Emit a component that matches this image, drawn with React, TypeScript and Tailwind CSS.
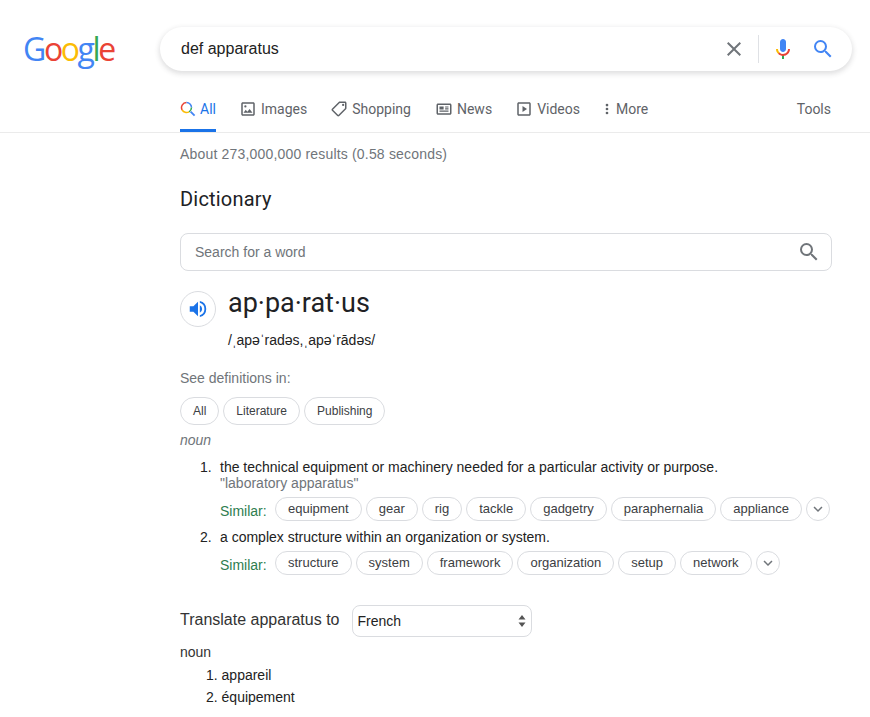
import type React from "react"

const similarOne = ["equipment", "gear", "rig", "tackle", "gadgetry", "paraphernalia", "appliance"]
const similarTwo = ["structure", "system", "framework", "organization", "setup", "network"]

export default function App() {
  return (
    <div className="w-[870px] h-[717px] overflow-hidden bg-white font-['Liberation_Sans',Arial,sans-serif]">
      <header className="h-[88px] flex items-start pt-[27px]">
        <GoogleLogo />
        <div className="ml-[46px] w-[692px] h-[44px] rounded-[22px] bg-white shadow-[0_2px_5px_1px_rgba(64,60,67,0.16)] flex items-center pl-[21px] pr-[17px]">
          <span className="text-[16px] text-[#222] flex-1">def apparatus</span>
          <svg viewBox="0 0 24 24" className="w-[24px] h-[24px] fill-[#70757a]">
            <path d="M19 6.41L17.59 5 12 10.59 6.41 5 5 6.41 10.59 12 5 17.59 6.41 19 12 13.41 17.59 19 19 17.59 13.41 12z" />
          </svg>
          <div className="ml-[12px] mr-[12px] w-px h-[28px] bg-[#dfe1e5]" />
          <MicIcon />
          <svg viewBox="0 0 24 24" className="ml-[16px] w-[24px] h-[24px] fill-[#4285f4]">
            <path d="M15.5 14h-.79l-.28-.27A6.471 6.471 0 0 0 16 9.5 6.5 6.5 0 1 0 9.5 16c1.61 0 3.09-.59 4.23-1.57l.27.28v.79l5 4.99L20.49 19l-4.99-5zm-6 0C7.01 14 5 11.99 5 9.5S7.01 5 9.5 5 14 7.01 14 9.5 11.99 14 9.5 14z" />
          </svg>
        </div>
      </header>

      <nav className="h-[45px] border-b border-[#ebebeb] pl-[180px] pr-[39px] flex items-start font-['Roboto',Arial,sans-serif] text-[14px] text-[#5f6368]">
        <div className="w-[36px] h-[44px] flex items-start gap-[4px] pt-[11px] border-b-[3px] border-[#1a73e8] text-[#1a73e8]">
          <AllIcon />
          <span>All</span>
        </div>
        <NavTab className="ml-[23px]" label="Images" icon={<ImagesIcon />} />
        <NavTab className="ml-[23px]" label="Shopping" icon={<ShoppingIcon />} />
        <NavTab className="ml-[24px]" label="News" icon={<NewsIcon />} />
        <NavTab className="ml-[23px]" label="Videos" icon={<VideosIcon />} />
        <NavTab className="ml-[18px]" label="More" icon={<MoreIcon />} gap="gap-0" />
        <span className="ml-auto pt-[11px]">Tools</span>
      </nav>

      <main className="pl-[180px] pr-[38px]">
        <p className="pt-[13px] text-[14px] tracking-[0.18px] leading-[16px] text-[#70757a]">About 273,000,000 results (0.58 seconds)</p>
        <h2 className="mt-[24px] text-[20px] tracking-[0.2px] leading-[26px] text-[#202124] font-['Roboto',Arial,sans-serif]">Dictionary</h2>

        <div className="mt-[21px] h-[38px] rounded-[8px] border border-[#dadce0] flex items-center pl-[14px] pr-[10px]">
          <span className="flex-1 text-[14px] text-[#70757a]">Search for a word</span>
          <svg viewBox="0 0 24 24" className="w-[24px] h-[24px] fill-[#70757a]">
            <path d="M15.5 14h-.79l-.28-.27A6.471 6.471 0 0 0 16 9.5 6.5 6.5 0 1 0 9.5 16c1.61 0 3.09-.59 4.23-1.57l.27.28v.79l5 4.99L20.49 19l-4.99-5zm-6 0C7.01 14 5 11.99 5 9.5S7.01 5 9.5 5 14 7.01 14 9.5 11.99 14 9.5 14z" />
          </svg>
        </div>

        <div className="mt-[14px] flex items-start">
          <div className="mt-[6px] w-[36px] h-[36px] rounded-full border border-[#dadce0] flex items-center justify-center">
            <svg viewBox="0 0 24 24" className="w-[22px] h-[22px] fill-[#1a73e8]">
              <path d="M3 9v6h4l5 5V4L7 9H3zm13.5 3A4.5 4.5 0 0 0 14 7.97v8.05A4.5 4.5 0 0 0 16.5 12zM14 3.23v2.06a7 7 0 0 1 0 13.42v2.06a9 9 0 0 0 0-17.54z" />
            </svg>
          </div>
          <div className="ml-[12px]">
            <div className="text-[27px] leading-[36px] text-[#202124] font-['Roboto',Arial,sans-serif]">ap·pa·rat·us</div>
            <div className="mt-[10px] text-[14px] leading-[18px] text-[#222]">/ˌapəˈradəs,ˌapəˈrādəs/</div>
          </div>
        </div>

        <p className="mt-[20px] text-[14px] leading-[18px] text-[#70757a]">See definitions in:</p>
        <div className="mt-[10px] flex gap-[4px]">
          <Chip label="All" />
          <Chip label="Literature" />
          <Chip label="Publishing" />
        </div>

        <p className="mt-[6px] text-[14px] leading-[18px] italic text-[#70757a]">noun</p>

        <div className="mt-[10px] flex pl-[20px] text-[14px] leading-[16px] text-[#222]">
          <span className="w-[20px]">1.</span>
          <div className="flex-1">
            <p>the technical equipment or machinery needed for a particular activity or purpose.</p>
            <p className="text-[#70757a]">"laboratory apparatus"</p>
            <SimilarRow words={similarOne} />
          </div>
        </div>
        <div className="mt-[8px] flex pl-[20px] text-[14px] leading-[16px] text-[#222]">
          <span className="w-[20px]">2.</span>
          <div className="flex-1">
            <p>a complex structure within an organization or system.</p>
            <SimilarRow words={similarTwo} />
          </div>
        </div>

        <div className="mt-[30px] flex items-start">
          <span className="mt-[3px] text-[16px] leading-[24px] text-[#333]">Translate apparatus to</span>
          <div className="ml-[12px] w-[180px] h-[32px] rounded-[8px] border border-[#dadce0] flex items-center justify-between pl-[5px] pr-[5px] text-[14px] text-[#222]">
            <span>French</span>
            <svg viewBox="0 0 8 14" className="w-[8px] h-[14px] fill-[#555]">
              <path d="M4 1L7.5 5.5H.5zM4 13L.5 8.5h7z" />
            </svg>
          </div>
        </div>
        <p className="mt-[6px] text-[14px] leading-[18px] text-[#333]">noun</p>
        <ol className="mt-[3px] pl-[26px] text-[14px] leading-[22px] text-[#222]">
          <li>1. appareil</li>
          <li>2. équipement</li>
        </ol>
      </main>
    </div>
  )
}

function GoogleLogo() {
  return (
    <div className="ml-[23px] w-[91px] h-[44px] flex items-center text-[32px] font-medium tracking-[-2.4px] font-['Open_Sans',Arial,sans-serif]">
      <span className="text-[#4285f4]">G</span>
      <span className="text-[#ea4335]">o</span>
      <span className="text-[#fbbc05]">o</span>
      <span className="text-[#4285f4]">g</span>
      <span className="text-[#34a853]">l</span>
      <span className="text-[#ea4335]">e</span>
    </div>
  )
}

interface NavTabProps {
  label: string
  icon: React.ReactNode
  className?: string
  gap?: string
}

function NavTab({ label, icon, className = "", gap = "gap-[4px]" }: NavTabProps) {
  return (
    <div className={`flex items-start pt-[11px] ${gap} ${className}`}>
      {icon}
      <span>{label}</span>
    </div>
  )
}

function Chip({ label }: { label: string }) {
  return (
    <span className="h-[28px] px-[12px] rounded-full border border-[#dadce0] flex items-center text-[12px] text-[#3c4043]">{label}</span>
  )
}

function SimilarRow({ words }: { words: string[] }) {
  return (
    <div className="mt-[6px] flex items-center gap-[4px]">
      <span className="w-[51px] pt-[3px] text-[14px] text-[#2e7d4f]">Similar:</span>
      {words.map((w) => (
        <span key={w} className="h-[24px] px-[12px] rounded-full border border-[#dadce0] flex items-center text-[13px] text-[#3c4043]">
          {w}
        </span>
      ))}
      <span className="w-[24px] h-[24px] rounded-full border border-[#dadce0] flex items-center justify-center">
        <svg viewBox="0 0 24 24" className="w-[18px] h-[18px] fill-[#70757a]">
          <path d="M16.59 8.59L12 13.17 7.41 8.59 6 10l6 6 6-6z" />
        </svg>
      </span>
    </div>
  )
}

function MicIcon() {
  return (
    <svg viewBox="0 0 24 24" className="w-[24px] h-[24px]">
      <path fill="#4285f4" d="m12 15c1.66 0 3-1.31 3-2.97v-7.02c0-1.66-1.34-3.01-3-3.01s-3 1.34-3 3.01v7.02c0 1.66 1.34 2.97 3 2.97z" />
      <path fill="#34a853" d="m11 18.08h2v3.92h-2z" />
      <path fill="#fbbc05" d="m7.05 16.87c-1.27-1.33-2.05-2.83-2.05-4.87h2c0 1.45 0.56 2.42 1.47 3.38v0.32l-1.15 1.18z" />
      <path fill="#ea4335" d="m12 16.93a4.97 5.25 0 0 1 -3.54 -1.55l-1.41 1.49c1.26 1.34 3.02 2.13 4.95 2.13 3.87 0 6.99-2.92 6.99-6.99h-1.99c0 2.92-2.24 4.93-4.99 4.93z" />
    </svg>
  )
}

function AllIcon() {
  return (
    <svg viewBox="0 0 16 16" className="w-[16px] h-[16px] mt-[2px] shrink-0" fill="none" strokeWidth="1.5">
      <path d="M10.6 10.6l4 4" stroke="#4285f4" strokeWidth="1.8" />
      <path d="M2.2 9A5 5 0 0 1 6.5 1.5" stroke="#ea4335" />
      <path d="M6.5 1.5A5 5 0 0 1 11.5 6.5" stroke="#4285f4" />
      <path d="M11.5 6.5A5 5 0 0 1 9 10.8" stroke="#34a853" />
      <path d="M9 10.8A5 5 0 0 1 2.2 9" stroke="#fbbc05" />
    </svg>
  )
}

function ImagesIcon() {
  return (
    <svg viewBox="0 0 24 24" className="w-[18px] h-[18px] mt-[1px] fill-[#5f6368]">
      <path d="M19 5v14H5V5h14m0-2H5c-1.1 0-2 .9-2 2v14c0 1.1.9 2 2 2h14c1.1 0 2-.9 2-2V5c0-1.1-.9-2-2-2zm-4.86 8.86l-3 3.87L9 13.14 6 17h12l-3.86-5.14z" />
      <circle cx="8.5" cy="8.5" r="1.5" />
    </svg>
  )
}

function ShoppingIcon() {
  return (
    <svg viewBox="0 0 24 24" className="w-[18px] h-[18px] mt-[1px] fill-[#5f6368]">
      <path d="M21.41 11.58l-9-9C12.05 2.22 11.55 2 11 2H4c-1.1 0-2 .9-2 2v7c0 .55.22 1.05.59 1.42l9 9c.36.36.86.58 1.41.58s1.05-.22 1.41-.59l7-7c.37-.36.59-.86.59-1.41s-.23-1.06-.59-1.42zM13 20.01L4 11V4h7v-.01l9 9-7 7.02z" transform="rotate(90 12 12)" />
      <circle cx="17.5" cy="6.5" r="1.5" />
    </svg>
  )
}

function NewsIcon() {
  return (
    <svg viewBox="0 0 24 24" className="w-[18px] h-[18px] mt-[1px] fill-[#5f6368]">
      <path d="M20 6.5v11H4v-11h16m0-2H4c-1.1 0-2 .9-2 2v11c0 1.1.9 2 2 2h16c1.1 0 2-.9 2-2v-11c0-1.1-.9-2-2-2z" />
      <path d="M6 8.5h5.5v4H6zM13.5 8.5H18V10h-4.5zM13.5 11H18v1.5h-4.5zM6 14h12v1.5H6z" />
    </svg>
  )
}

function VideosIcon() {
  return (
    <svg viewBox="0 0 24 24" className="w-[18px] h-[18px] mt-[1px] fill-[#5f6368]">
      <path d="M19 5v14H5V5h14m0-2H5c-1.1 0-2 .9-2 2v14c0 1.1.9 2 2 2h14c1.1 0 2-.9 2-2V5c0-1.1-.9-2-2-2z" />
      <path d="M10 8v8l6-4z" />
    </svg>
  )
}

function MoreIcon() {
  return (
    <svg viewBox="0 0 24 24" className="w-[18px] h-[18px] mt-[1px] fill-[#5f6368]">
      <circle cx="12" cy="6.7" r="1.8" />
      <circle cx="12" cy="12" r="1.8" />
      <circle cx="12" cy="17.3" r="1.8" />
    </svg>
  )
}
